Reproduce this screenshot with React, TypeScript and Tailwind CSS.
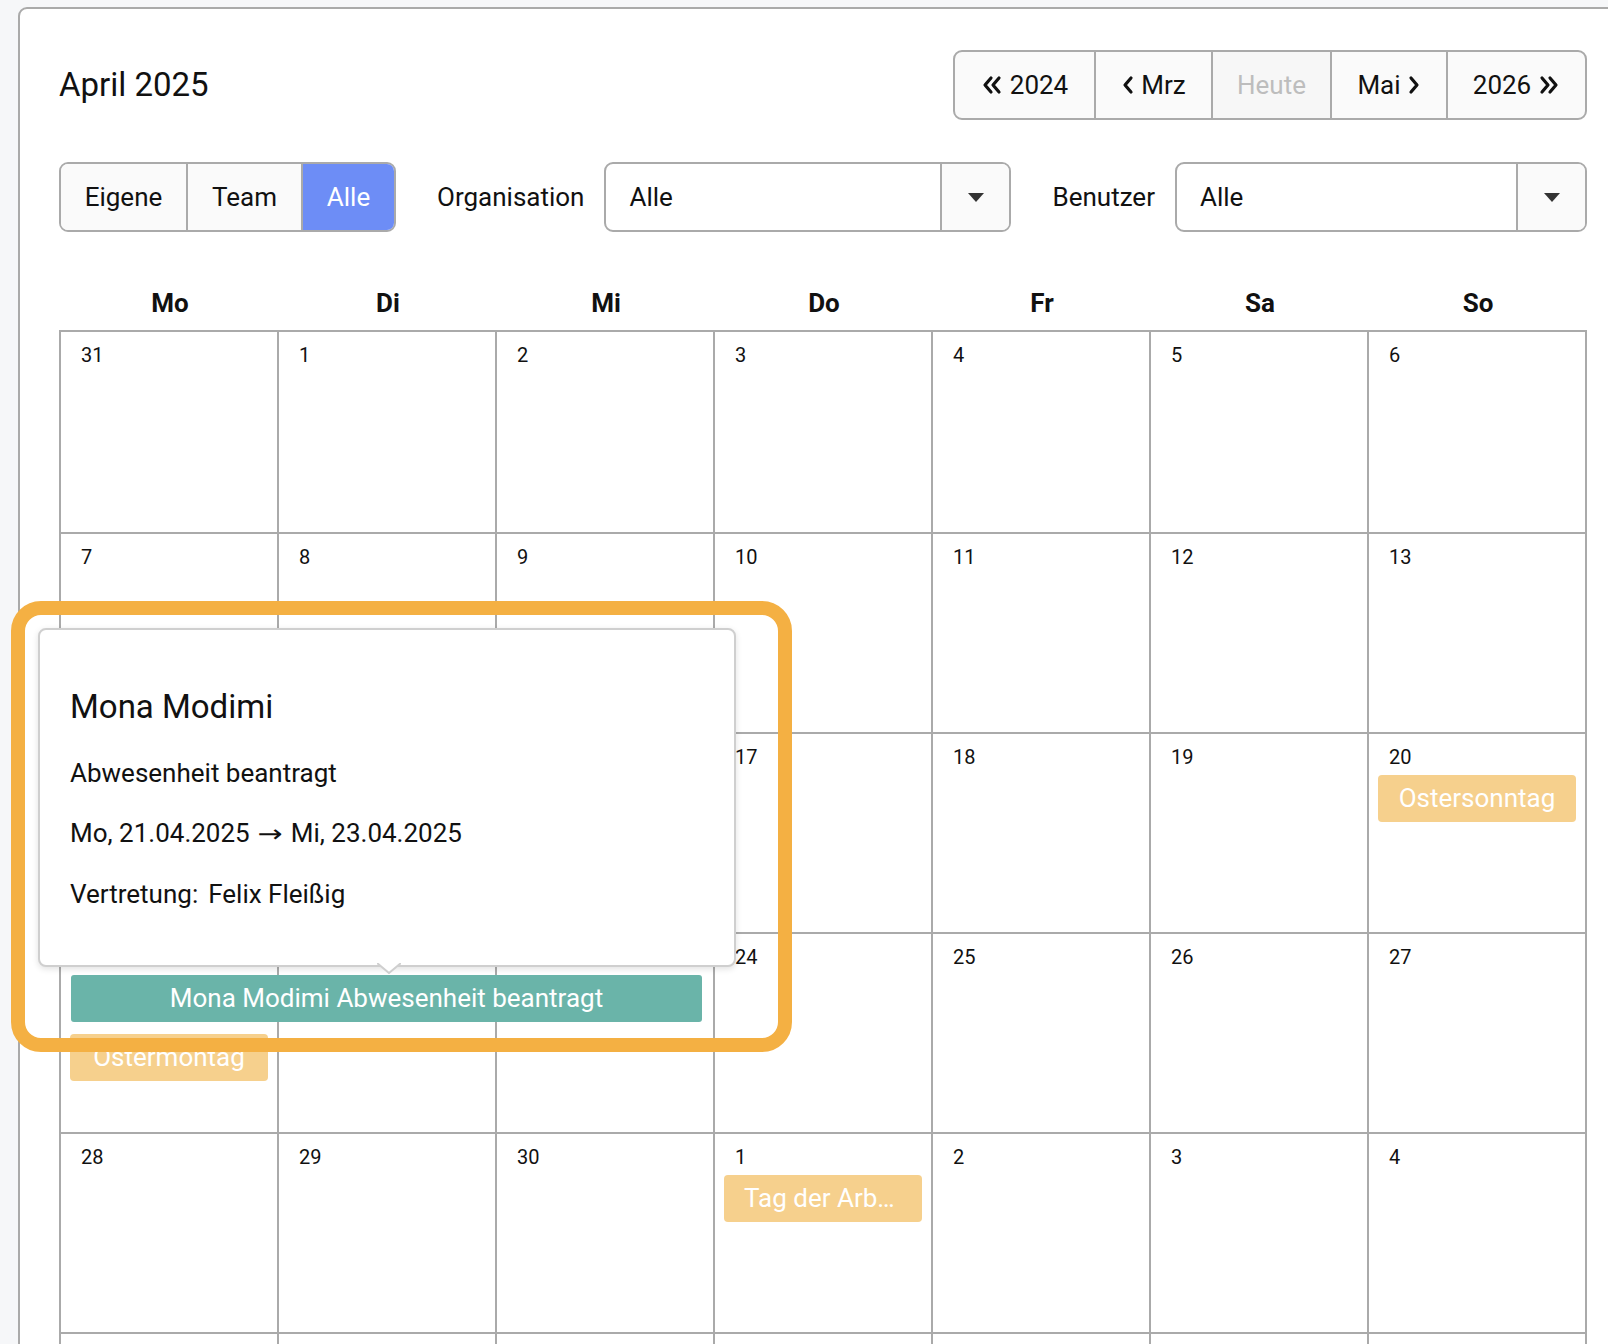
import React from "react";

const weeks: number[][] = [
  [31, 1, 2, 3, 4, 5, 6],
  [7, 8, 9, 10, 11, 12, 13],
  [14, 15, 16, 17, 18, 19, 20],
  [21, 22, 23, 24, 25, 26, 27],
  [28, 29, 30, 1, 2, 3, 4],
  [5, 6, 7, 8, 9, 10, 11],
];

type Ev = { cls: string; text: string; kind: "holiday" | "absence" };

const events: Record<number, Ev[]> = {
  2: [{ cls: "col-start-7 col-span-1 row-start-1", text: "Ostersonntag", kind: "holiday" }],
  3: [
    { cls: "col-start-1 col-span-3 row-start-1", text: "Mona Modimi Abwesenheit beantragt", kind: "absence" },
    { cls: "col-start-1 col-span-1 row-start-2", text: "Ostermontag", kind: "holiday" },
  ],
  4: [{ cls: "col-start-4 col-span-1 row-start-1", text: "Tag der Arbeit", kind: "holiday" }],
};

function DoubleChevron({ dir }: { dir: "left" | "right" }) {
  return (
    <svg width="22" height="20" viewBox="0 0 22 20" fill="none" stroke="#111" strokeWidth="3.2" strokeLinecap="round" strokeLinejoin="round">
      {dir === "left" ? (
        <>
          <polyline points="10,3 4,10 10,17" />
          <polyline points="18,3 12,10 18,17" />
        </>
      ) : (
        <>
          <polyline points="4,3 10,10 4,17" />
          <polyline points="12,3 18,10 12,17" />
        </>
      )}
    </svg>
  );
}

function Chevron({ dir }: { dir: "left" | "right" }) {
  return (
    <svg width="13" height="20" viewBox="0 0 13 20" fill="none" stroke="#111" strokeWidth="3.2" strokeLinecap="round" strokeLinejoin="round">
      {dir === "left" ? <polyline points="10,3 4,10 10,17" /> : <polyline points="3,3 9,10 3,17" />}
    </svg>
  );
}

function Caret() {
  return (
    <svg width="16" height="9" viewBox="0 0 16 9">
      <polygon points="0,0 16,0 8,9" fill="#333" />
    </svg>
  );
}

function Select({ className }: { className: string }) {
  return (
    <div className={`flex h-[70px] border-2 border-[#aaaaaa] rounded-[9px] bg-white overflow-hidden ${className}`}>
      <div className="flex-1 flex items-center pl-[23px] text-[26px] text-[#111]">Alle</div>
      <div className="w-[69px] border-l-2 border-[#aaaaaa] bg-[#fafafa] flex items-center justify-center">
        <Caret />
      </div>
    </div>
  );
}

export default function App() {
  return (
    <div className="relative w-[1608px] h-[1344px] overflow-hidden bg-[#f6f7f9] font-[Roboto,sans-serif] text-[#111]">
      <div className="ml-[18px] mt-[7px] w-[1610px] border-2 border-[#aaaaaa] rounded-[9px] bg-white px-[39px] pt-[41px]">
        {/* Header */}
        <div className="flex items-center justify-between h-[70px]">
          <h1 className="text-[33px] leading-[40px]">April 2025</h1>
          <div className="flex h-[70px] border-2 border-[#aaaaaa] rounded-[9px] bg-[#fafafa] overflow-hidden text-[26px]">
            <div className="w-[139px] flex items-center justify-center gap-[7px]">
              <DoubleChevron dir="left" />
              <span>2024</span>
            </div>
            <div className="w-[117px] border-l-2 border-[#aaaaaa] flex items-center justify-center gap-[7px]">
              <Chevron dir="left" />
              <span>Mrz</span>
            </div>
            <div className="w-[119px] border-l-2 border-[#aaaaaa] flex items-center justify-center text-[#bdbdbd] bg-[#f7f7f7]">
              Heute
            </div>
            <div className="w-[116px] border-l-2 border-[#aaaaaa] flex items-center justify-center gap-[7px]">
              <span>Mai</span>
              <Chevron dir="right" />
            </div>
            <div className="w-[139px] border-l-2 border-[#aaaaaa] flex items-center justify-center gap-[7px]">
              <span>2026</span>
              <DoubleChevron dir="right" />
            </div>
          </div>
        </div>

        {/* Filters */}
        <div className="mt-[42px] flex items-center h-[70px] text-[26px]">
          <div className="flex h-[70px] border-2 border-[#aaaaaa] rounded-[9px] overflow-hidden">
            <div className="w-[127px] border-r-2 border-[#aaaaaa] bg-[#fafafa] flex items-center justify-center">Eigene</div>
            <div className="w-[115px] border-r-2 border-[#aaaaaa] bg-[#fafafa] flex items-center justify-center">Team</div>
            <div className="w-[91px] bg-[#6d8df6] text-white flex items-center justify-center">Alle</div>
          </div>
          <span className="ml-[41px] mr-[20px]">Organisation</span>
          <Select className="w-[407px]" />
          <span className="ml-[41px] mr-[20px]">Benutzer</span>
          <Select className="flex-1" />
        </div>

        {/* Day headers */}
        <div className="mt-[44px] grid grid-cols-7 h-[54px] pl-[2px] items-center text-[26px] leading-[30px] font-bold">
          {["Mo", "Di", "Mi", "Do", "Fr", "Sa", "So"].map((d) => (
            <div key={d} className="text-center">{d}</div>
          ))}
        </div>

        {/* Grid */}
        <div className="border-l-2 border-t-2 border-[#aaaaaa]">
          {weeks.map((w, wi) => (
            <div key={wi} className={`relative grid grid-cols-7 ${wi === 0 ? "h-[202px]" : "h-[200px]"}`}>
              {w.map((d, di) => (
                <div key={di} className="border-r-2 border-b-2 border-[#aaaaaa] pl-[20px] pt-[11px] text-[20px] leading-[24px]">
                  {d}
                </div>
              ))}
              {events[wi] && (
                <div className="absolute inset-0 grid grid-cols-7 content-start auto-rows-[47px] gap-y-[12px] pt-[41px]">
                  {events[wi].map((e, ei) =>
                    e.kind === "holiday" ? (
                      <div
                        key={ei}
                        className={`${e.cls} min-w-0 ml-[9px] mr-[11px] rounded-[4px] bg-[#f6d08d] text-white text-[26px] leading-[47px] px-[20px] text-center whitespace-nowrap overflow-hidden text-ellipsis`}
                      >
                        {e.text}
                      </div>
                    ) : (
                      <div
                        key={ei}
                        className={`${e.cls} min-w-0 ml-[10px] mr-[13px] rounded-[3px] bg-[#6ab4a9] text-white text-[26px] leading-[47px] text-center whitespace-nowrap overflow-hidden`}
                      >
                        {e.text}
                      </div>
                    )
                  )}
                </div>
              )}
            </div>
          ))}
        </div>
      </div>

      {/* Tooltip */}
      <div className="absolute left-[38px] top-[628px] w-[698px] h-[339px] bg-white border-2 border-[#cfcfcf] rounded-[8px] shadow-[0_2px_6px_rgba(0,0,0,0.12)] pl-[30px] pt-[57px]">
        <div className="text-[33px] leading-[40px]">Mona Modimi</div>
        <div className="mt-[30px] text-[26px] leading-[32px]">Abwesenheit beantragt</div>
        <div className="mt-[28px] text-[26px] leading-[32px]">
          Mo, 21.04.2025 <span className="inline-block mx-[4px] scale-x-[1.25] font-['DejaVu_Sans',sans-serif] text-[24px]">→</span> Mi, 23.04.2025
        </div>
        <div className="mt-[28px] text-[26px] leading-[32px]">
          Vertretung:<span className="ml-[10px]">Felix Fleißig</span>
        </div>
        <svg className="absolute left-[337px] bottom-[-9px]" width="24" height="11" viewBox="0 0 24 11">
          <polygon points="0,0 24,0 12,10" fill="#ffffff" />
          <polyline points="0,0 12,10 24,0" fill="none" stroke="#cfcfcf" strokeWidth="2" />
        </svg>
      </div>

      {/* Highlight ring */}
      <div className="absolute left-[11px] top-[601px] w-[781px] h-[451px] border-[14px] border-[#f4b043] rounded-[30px]" />
    </div>
  );
}
